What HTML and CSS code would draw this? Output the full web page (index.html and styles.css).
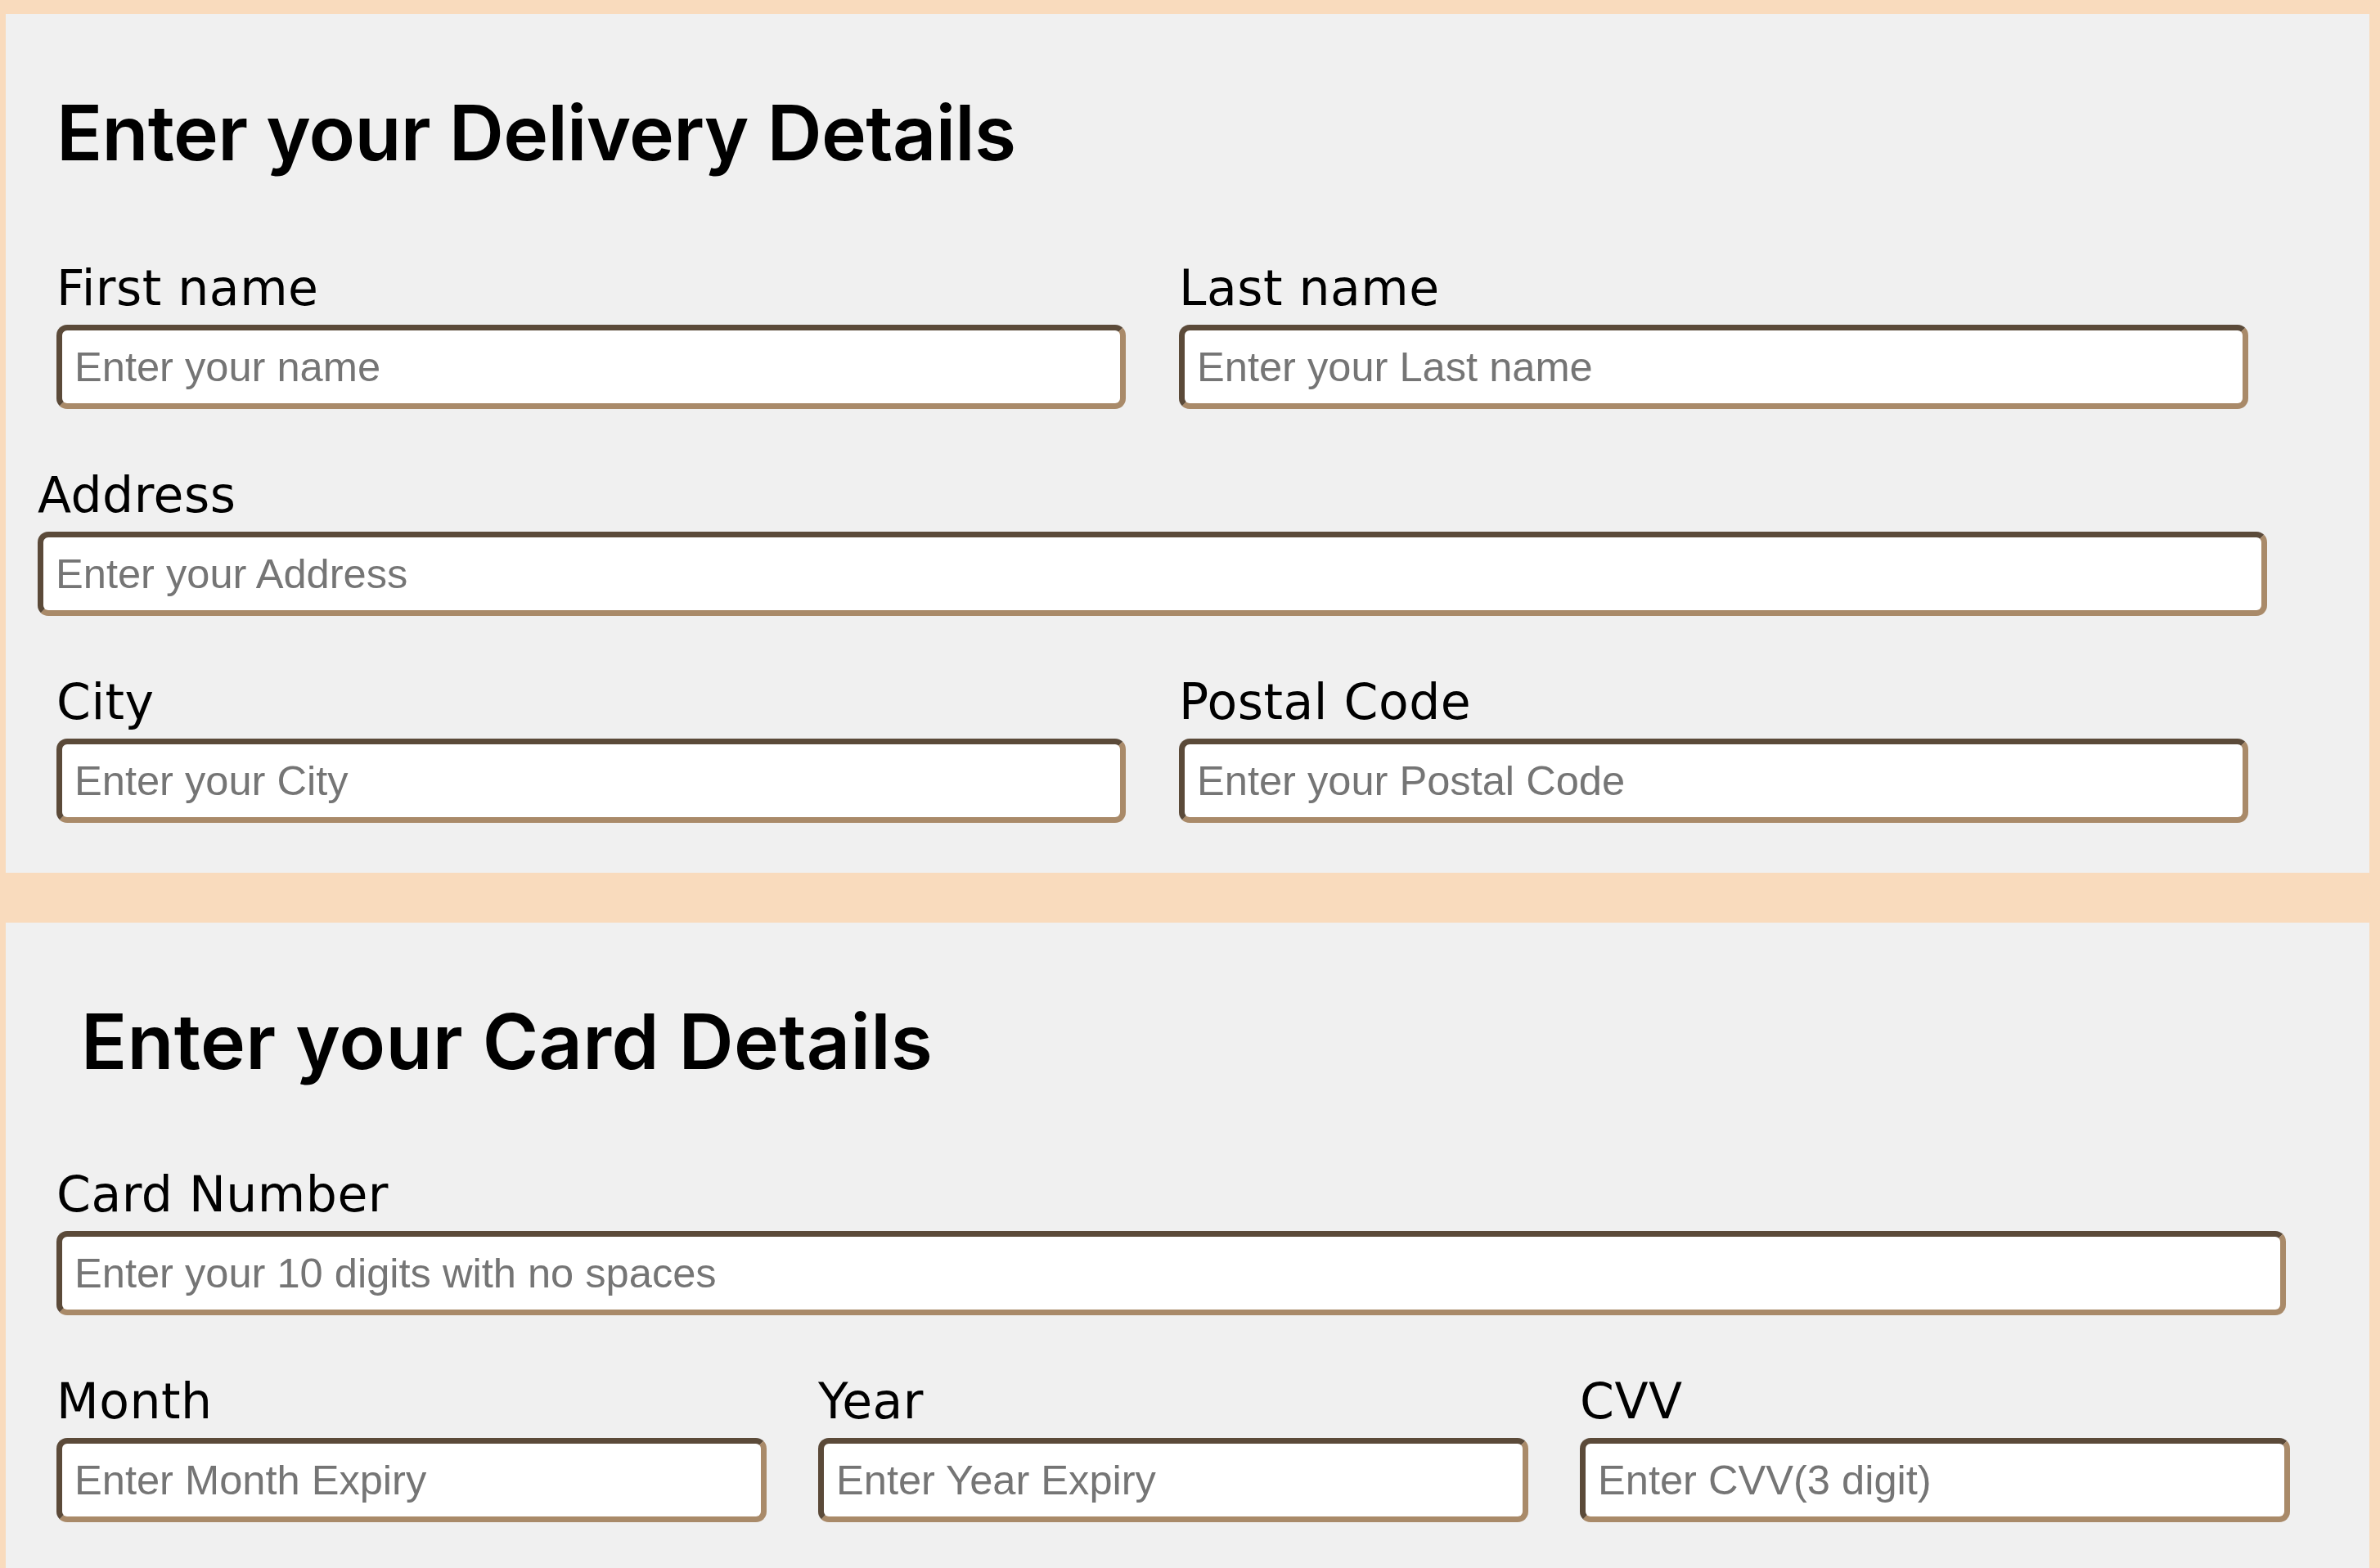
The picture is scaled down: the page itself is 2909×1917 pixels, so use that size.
FILE: index.html
```html
<!DOCTYPE html>
<html lang="en">
<head>
<meta charset="utf-8">
<title>Checkout details</title>
<link rel="stylesheet" href="styles.css">
</head>
<body>
<main class="page">
  <section class="panel">
    <h1 class="panel-title">Enter your Delivery Details</h1>
    <div class="row row-two">
      <div class="field">
        <label class="field-label" for="fname">First name</label>
        <input class="field-input" id="fname" type="text" placeholder="Enter your name">
      </div>
      <div class="field">
        <label class="field-label" for="lname">Last name</label>
        <input class="field-input" id="lname" type="text" placeholder="Enter your Last name">
      </div>
    </div>
    <div class="field field-address">
      <label class="field-label" for="address">Address</label>
      <input class="field-input" id="address" type="text" placeholder="Enter your Address">
    </div>
    <div class="row row-two">
      <div class="field">
        <label class="field-label" for="city">City</label>
        <input class="field-input" id="city" type="text" placeholder="Enter your City">
      </div>
      <div class="field">
        <label class="field-label" for="postal">Postal Code</label>
        <input class="field-input" id="postal" type="text" placeholder="Enter your Postal Code">
      </div>
    </div>
  </section>

  <section class="panel">
    <h1 class="panel-title panel-title-card">Enter your Card Details</h1>
    <div class="field field-card">
      <label class="field-label" for="cardnum">Card Number</label>
      <input class="field-input" id="cardnum" type="text" placeholder="Enter your 10 digits with no spaces">
    </div>
    <div class="row row-three">
      <div class="field">
        <label class="field-label" for="month">Month</label>
        <input class="field-input" id="month" type="text" placeholder="Enter Month Expiry">
      </div>
      <div class="field">
        <label class="field-label" for="year">Year</label>
        <input class="field-input" id="year" type="text" placeholder="Enter Year Expiry">
      </div>
      <div class="field">
        <label class="field-label" for="cvv">CVV</label>
        <input class="field-input" id="cvv" type="text" placeholder="Enter CVV(3 digit)">
      </div>
    </div>
  </section>
</main>
</body>
</html>
```

FILE: styles.css
```css
html, body {
  margin: 0;
  background: #f9dbbd;
}

body {
  padding: 17px 13px 0 7px;
}

.page {
  display: flex;
  flex-direction: column;
  gap: 61px;
}

.panel {
  background: #f0f0f0;
  padding: 85px 0 61px 62px;
  display: flex;
  flex-direction: column;
  gap: 63px;
}

.panel-title {
  margin: 0 0 25px 0;
  font-family: "Inter", "Liberation Sans", sans-serif;
  font-weight: 600;
  font-size: 93px;
  line-height: 120px;
  color: #000;
  letter-spacing: -0.7px;
}

.panel-title-card {
  padding-left: 30px;
  margin-bottom: 22px;
  letter-spacing: 0.3px;
}

.row {
  display: grid;
}

.row-two {
  grid-template-columns: 1307px 1307px;
  column-gap: 65px;
}

.row-three {
  grid-template-columns: 868px 868px 868px;
  column-gap: 63px;
}

.field {
  display: flex;
  flex-direction: column;
}

.field-address {
  width: 2725px;
  margin-left: -23px;
}

.field-card {
  width: 2725px;
}

.field-label {
  font-family: "DejaVu Sans", "Liberation Sans", sans-serif;
  font-size: 60px;
  line-height: 84px;
  letter-spacing: 0.5px;
  color: #000;
  margin-bottom: 3px;
}

.field-input {
  box-sizing: border-box;
  width: 100%;
  height: 103px;
  margin: 0;
  padding: 0 15px;
  border-width: 7px;
  border-style: solid;
  border-color: #5b4a39 #a98a69 #a98a69 #5b4a39;
  border-radius: 13px;
  background: #fff;
  font-family: "Liberation Sans", Arial, sans-serif;
  font-size: 50.6px;
  color: #000;
  outline: none;
}

.field-input::placeholder {
  color: #757575;
  opacity: 1;
}
```
